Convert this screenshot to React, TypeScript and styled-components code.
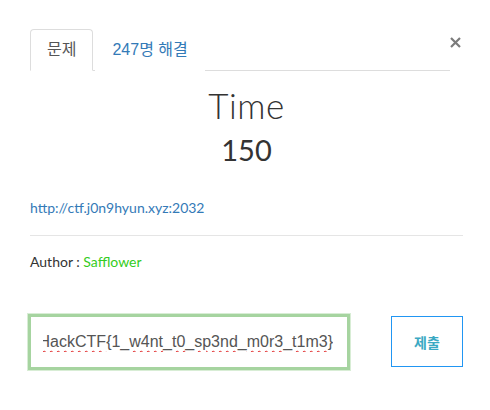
import React from "react";
import styled, { createGlobalStyle } from "styled-components";

const Global = createGlobalStyle`
  html, body { margin: 0; padding: 0; background: #fff; }
  body { font-family: "Lato", "Noto Sans CJK KR", sans-serif; color: #333; }
`;

const Page = styled.div`
  width: 490px;
  height: 410px;
  box-sizing: border-box;
  padding: 29px 27px 0 30px;
`;

const Header = styled.div`
  display: flex;
  align-items: flex-start;
  justify-content: space-between;
`;

const Tabs = styled.ul`
  display: flex;
  width: 420px;
  margin: 0;
  padding: 0;
  list-style: none;
  border-bottom: 1px solid #ddd;
`;

const Tab = styled.li<{ $active?: boolean }>`
  margin: 0 2px -1px 0;
  padding: 10px 16px;
  line-height: 20px;
  font-family: "Liberation Sans", "Noto Sans CJK KR", sans-serif;
  font-size: 16px;
  border: 1px solid ${(p) => (p.$active ? "#ddd" : "transparent")};
  border-bottom-color: ${(p) => (p.$active ? "#fff" : "transparent")};
  border-radius: 4px 4px 0 0;
  background: #fff;
  color: ${(p) => (p.$active ? "#555" : "#337ab7")};
`;

const Close = styled.button`
  margin: 7px 2px 0 0;
  padding: 0;
  border: 0;
  background: none;
  width: 11px;
  height: 11px;
  display: block;
`;

const Title = styled.h1`
  margin: 13px 0 0;
  text-align: center;
  font-family: "Lato", sans-serif;
  font-weight: 300;
  font-size: 35px;
  line-height: 42px;
  color: #333;
  letter-spacing: 0.5px;
`;

const Points = styled.div`
  margin-top: 6px;
  text-align: center;
  font-family: "Lato", sans-serif;
  font-size: 29px;
  line-height: 36px;
  color: #333;
`;

const Link = styled.a`
  display: block;
  margin-top: 30px;
  font-family: "Lato", sans-serif;
  font-size: 14px;
  line-height: 20px;
  color: #337ab7;
  text-decoration: none;
`;

const Rule = styled.hr`
  margin: 17px 0 0;
  border: 0;
  border-top: 1px solid #e5e5e5;
`;

const Author = styled.p`
  margin: 16px 0 0;
  font-family: "Lato", sans-serif;
  font-size: 14px;
  line-height: 20px;
  color: #333;
`;

const Name = styled.span`
  color: #33cc22;
`;

const SubmitRow = styled.div`
  margin-top: 44px;
  display: flex;
  align-items: center;
  justify-content: space-between;
  padding-left: 1px;
`;

const InputBox = styled.div`
  width: 316px;
  height: 50px;
  box-sizing: border-box;
  padding: 0 14px 0 12px;
  display: flex;
  align-items: center;
  background: #fff;
  box-shadow: 0 0 0 3px #a6d4a0, 0 0 0 4px #d8edd5;
`;

const TextClip = styled.div`
  flex: 1;
  overflow: hidden;
  display: flex;
  justify-content: flex-end;
  white-space: nowrap;
  font-family: "Liberation Sans", Arial, sans-serif;
  font-size: 16px;
  line-height: 20px;
  color: #555;
`;

const Misspelt = styled.span`
  text-decoration: underline wavy #e02020;
  text-decoration-thickness: 1px;
  text-underline-offset: 3px;
`;

const Submit = styled.button`
  width: 72px;
  height: 51px;
  box-sizing: border-box;
  border: 1px solid #2196f3;
  background: #fff;
  color: #3aa9c3;
  font-family: "Noto Sans CJK KR", sans-serif;
  font-weight: 700;
  font-size: 14px;
  padding: 0;
`;

export default function App() {
  return (
    <>
      <Global />
      <Page>
        <Header>
          <Tabs>
            <Tab $active>문제</Tab>
            <Tab>247명 해결</Tab>
          </Tabs>
          <Close aria-label="close">
            <svg width="11" height="11" viewBox="0 0 11 11">
              <path d="M1 1L10 10M10 1L1 10" stroke="#7b7b7b" strokeWidth="2.2" />
            </svg>
          </Close>
        </Header>
        <Title>Time</Title>
        <Points>150</Points>
        <Link href="#">http://ctf.j0n9hyun.xyz:2032</Link>
        <Rule />
        <Author>
          Author : <Name>Safflower</Name>
        </Author>
        <SubmitRow>
          <InputBox>
            <TextClip>
              <span>
                <Misspelt>HackCTF</Misspelt>
                {"{1_"}
                <Misspelt>w4nt</Misspelt>_<Misspelt>t0</Misspelt>_
                <Misspelt>sp3nd</Misspelt>_<Misspelt>m0r3</Misspelt>_
                <Misspelt>t1m3</Misspelt>
                {"}"}
              </span>
            </TextClip>
          </InputBox>
          <Submit>제출</Submit>
        </SubmitRow>
      </Page>
    </>
  );
}
